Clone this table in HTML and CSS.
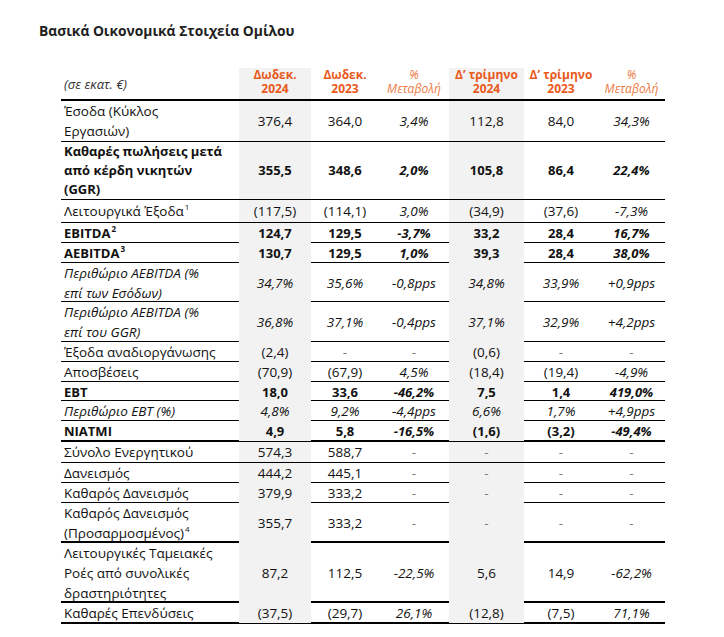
FILE: index.html
```html
<!DOCTYPE html>
<html lang="el">
<head>
<meta charset="utf-8">
<title>Βασικά Οικονομικά Στοιχεία Ομίλου</title>
<link rel="stylesheet" href="styles.css">
</head>
<body>
<div class="page">
  <h1 class="title">Βασικά Οικονομικά Στοιχεία Ομίλου</h1>
  <div class="table">
    <div class="row head">
      <div class="c lab unit">(σε εκατ. €)</div>
      <div class="c hd shade"><b>Δωδεκ.<br>2024</b></div>
      <div class="c hd"><b>Δωδεκ.<br>2023</b></div>
      <div class="c hd"><i>%<br>Μεταβολή</i></div>
      <div class="c hd shade"><b>Δ’ τρίμηνο<br>2024</b></div>
      <div class="c hd"><b>Δ’ τρίμηνο<br>2023</b></div>
      <div class="c hd"><i>%<br>Μεταβολή</i></div>
    </div>

    <div class="row h41">
      <div class="c lab"><span>Έσοδα (Κύκλος<br>Εργασιών)</span></div>
      <div class="c shade">376,4</div><div class="c">364,0</div><div class="c it">3,4%</div>
      <div class="c shade">112,8</div><div class="c">84,0</div><div class="c it">34,3%</div>
    </div>
    <div class="row h58 bold tight">
      <div class="c lab"><span>Καθαρές πωλήσεις μετά<br>από κέρδη νικητών<br>(GGR)</span></div>
      <div class="c shade">355,5</div><div class="c">348,6</div><div class="c it">2,0%</div>
      <div class="c shade">105,8</div><div class="c">86,4</div><div class="c it">22,4%</div>
    </div>
    <div class="row h23">
      <div class="c lab"><span>Λειτουργικά Έξοδα<sup>1</sup></span></div>
      <div class="c shade">(117,5)</div><div class="c">(114,1)</div><div class="c it">3,0%</div>
      <div class="c shade">(34,9)</div><div class="c">(37,6)</div><div class="c it">-7,3%</div>
    </div>
    <div class="row h20 bold">
      <div class="c lab"><span>EBITDA<sup>2</sup></span></div>
      <div class="c shade">124,7</div><div class="c">129,5</div><div class="c it">-3,7%</div>
      <div class="c shade">33,2</div><div class="c">28,4</div><div class="c it">16,7%</div>
    </div>
    <div class="row h20 bold">
      <div class="c lab"><span>AEBITDA<sup>3</sup></span></div>
      <div class="c shade">130,7</div><div class="c">129,5</div><div class="c it">1,0%</div>
      <div class="c shade">39,3</div><div class="c">28,4</div><div class="c it">38,0%</div>
    </div>
    <div class="row h39 italic">
      <div class="c lab"><span>Περιθώριο AEBITDA (%<br>επί των Εσόδων)</span></div>
      <div class="c shade">34,7%</div><div class="c">35,6%</div><div class="c">-0,8pps</div>
      <div class="c shade">34,8%</div><div class="c">33,9%</div><div class="c">+0,9pps</div>
    </div>
    <div class="row h40 italic">
      <div class="c lab"><span>Περιθώριο AEBITDA (%<br>επί του GGR)</span></div>
      <div class="c shade">36,8%</div><div class="c">37,1%</div><div class="c">-0,4pps</div>
      <div class="c shade">37,1%</div><div class="c">32,9%</div><div class="c">+4,2pps</div>
    </div>
    <div class="row h20">
      <div class="c lab"><span>Έξοδα αναδιοργάνωσης</span></div>
      <div class="c shade">(2,4)</div><div class="c dash">-</div><div class="c dash">-</div>
      <div class="c shade">(0,6)</div><div class="c dash">-</div><div class="c dash">-</div>
    </div>
    <div class="row h20">
      <div class="c lab"><span>Αποσβέσεις</span></div>
      <div class="c shade">(70,9)</div><div class="c">(67,9)</div><div class="c it">4,5%</div>
      <div class="c shade">(18,4)</div><div class="c">(19,4)</div><div class="c it">-4,9%</div>
    </div>
    <div class="row h19 bold">
      <div class="c lab"><span>EBT</span></div>
      <div class="c shade">18,0</div><div class="c">33,6</div><div class="c it">-46,2%</div>
      <div class="c shade">7,5</div><div class="c">1,4</div><div class="c it">419,0%</div>
    </div>
    <div class="row h20 italic">
      <div class="c lab"><span>Περιθώριο EBT (%)</span></div>
      <div class="c shade">4,8%</div><div class="c">9,2%</div><div class="c">-4,4pps</div>
      <div class="c shade">6,6%</div><div class="c">1,7%</div><div class="c">+4,9pps</div>
    </div>
    <div class="row h21 bold thick">
      <div class="c lab"><span>NIATMI</span></div>
      <div class="c shade">4,9</div><div class="c">5,8</div><div class="c it">-16,5%</div>
      <div class="c shade">(1,6)</div><div class="c">(3,2)</div><div class="c it">-49,4%</div>
    </div>
    <div class="row h21">
      <div class="c lab"><span>Σύνολο Ενεργητικού</span></div>
      <div class="c shade">574,3</div><div class="c">588,7</div><div class="c dash">-</div>
      <div class="c shade dash">-</div><div class="c dash">-</div><div class="c dash">-</div>
    </div>
    <div class="row h20">
      <div class="c lab"><span>Δανεισμός</span></div>
      <div class="c shade">444,2</div><div class="c">445,1</div><div class="c dash">-</div>
      <div class="c shade dash">-</div><div class="c dash">-</div><div class="c dash">-</div>
    </div>
    <div class="row h20">
      <div class="c lab"><span>Καθαρός Δανεισμός</span></div>
      <div class="c shade">379,9</div><div class="c">333,2</div><div class="c dash">-</div>
      <div class="c shade dash">-</div><div class="c dash">-</div><div class="c dash">-</div>
    </div>
    <div class="row h40 thick">
      <div class="c lab"><span>Καθαρός Δανεισμός<br>(Προσαρμοσμένος)<sup>4</sup></span></div>
      <div class="c shade">355,7</div><div class="c">333,2</div><div class="c dash">-</div>
      <div class="c shade dash">-</div><div class="c dash">-</div><div class="c dash">-</div>
    </div>
    <div class="row h60 thick">
      <div class="c lab"><span>Λειτουργικές Ταμειακές<br>Ροές από συνολικές<br>δραστηριότητες</span></div>
      <div class="c shade">87,2</div><div class="c">112,5</div><div class="c it">-22,5%</div>
      <div class="c shade">5,6</div><div class="c">14,9</div><div class="c it">-62,2%</div>
    </div>
    <div class="row h21 thick">
      <div class="c lab"><span>Καθαρές Επενδύσεις</span></div>
      <div class="c shade">(37,5)</div><div class="c">(29,7)</div><div class="c it">26,1%</div>
      <div class="c shade">(12,8)</div><div class="c">(7,5)</div><div class="c it">71,1%</div>
    </div>
  </div>
</div>
</body>
</html>
```

FILE: styles.css
```css
html, body {
  margin: 0;
  padding: 0;
  background: #ffffff;
}

body {
  font-family: "Open Sans", "Noto Sans", "DejaVu Sans", sans-serif;
  color: #111111;
}

.page {
  padding: 21px 0 0 39px;
}

.title {
  margin: 0;
  font-size: 13.8px;
  line-height: 20px;
  font-weight: 700;
  color: #1e1e1e;
}

.table {
  width: 604px;
  margin: 27px 0 0 22px;
}

.row {
  display: grid;
  grid-template-columns: 178px 72px 68px 70px 75px 74px 67px;
  box-sizing: border-box;
  border-bottom: 1px solid #000000;
}

.row.thick {
  border-bottom-width: 2px;
}

.c {
  display: flex;
  align-items: center;
  justify-content: center;
  text-align: center;
  font-size: 13.5px;
  line-height: 20px;
  white-space: nowrap;
}

.lab {
  justify-content: flex-start;
  text-align: left;
  padding-left: 3px;
}

.shade {
  background: #f2f2f2;
}

.bold .c {
  font-weight: 700;
  font-size: 13px;
}

.tight .c {
  line-height: 19px;
}

.italic .c,
.c.it {
  font-style: italic;
}

.dash {
  color: #7a7a7a;
}

sup {
  font-size: 8px;
  line-height: 0;
  vertical-align: 6px;
  margin-left: 1px;
}

/* header */
.head {
  height: 33px;
  border-bottom-width: 2px;
}

.unit {
  font-style: italic;
  color: #333333;
  font-size: 13px;
}

.hd {
  align-items: flex-end;
  color: #e9591b;
  font-size: 12px;
  line-height: 14px;
  padding-bottom: 3px;
}

.hd i {
  font-weight: 400;
  color: #ee7a45;
}

/* row heights */
.h19 { height: 19px; }
.h20 { height: 20px; }
.h21 { height: 21px; }
.h23 { height: 23px; }
.h39 { height: 39px; }
.h40 { height: 40px; }
.h41 { height: 41px; }
.h58 { height: 58px; }
.h60 { height: 60px; }
```
